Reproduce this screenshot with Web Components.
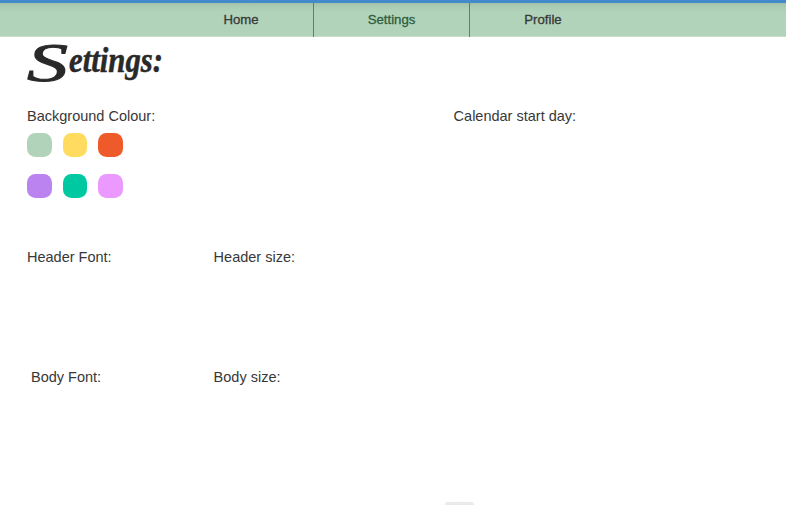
<!DOCTYPE html>
<html lang="en">
<head>
<meta charset="utf-8">
<title>Settings</title>
<style>
html, body { margin: 0; height: 100%; overflow: hidden; background: #fff; }
body { font-family: "Liberation Sans", Arial, sans-serif; font-size: 14.5px; color: #383838; }
</style>
</head>
<body>
<settings-app></settings-app>
<script>
const define = (name, html) => customElements.define(name, class extends HTMLElement {
  constructor() {
    super();
    const t = document.createElement('template');
    t.innerHTML = html;
    this.attachShadow({ mode: 'open' }).append(t.content.cloneNode(true));
  }
});

define('nav-item', `
<style>
:host { display: flex; box-sizing: border-box; width: 145px; height: 34px; padding-left: 1px; justify-content: center; font-size: 13.2px; line-height: 33px; color: #383838; -webkit-text-stroke: .3px currentColor; }
:host([current]) { width: 157px; padding: 0; color: #2f5d3e; border: solid #3c80c4; border-width: 0 1px; }
</style><slot></slot>`);

define('nav-bar', `
<style>
:host { display: flex; box-sizing: border-box; height: 37px; padding-left: 168px; border-top: 3px solid #428bca;
  background: linear-gradient(#a2c1aa 0, #abccb4 4px, #b0d3ba 9px); box-shadow: inset 0 -1px #c5dfcc; }
</style><slot></slot>`);

define('page-title', `
<style>
:host { display: block; height: 50px; margin-left: 26px; }
svg { display: block; overflow: visible; }
text { font-family: "Liberation Serif", serif; font-style: italic; font-weight: bold; fill: #292929; stroke: #292929; }
.initial { font-weight: normal; font-size: 55px; stroke-width: 1px; }
.rest { font-size: 36px; stroke-width: .5px; }
</style>
<svg width="140" height="50" role="heading" aria-label="Settings:">
<text><tspan class="initial" x="1" y="44" textLength="41" lengthAdjust="spacingAndGlyphs">S</tspan><tspan class="rest" x="43" y="35" textLength="94" lengthAdjust="spacingAndGlyphs">ettings:</tspan></text>
</svg>`);

define('setting-field', `
<style>
:host { display: block; line-height: 18px; white-space: nowrap; }
</style><slot></slot><slot name="control"></slot>`);

define('floating-tab', `
<style>
:host { position: absolute; left: 445px; top: 502px; width: 29px; height: 8px; border-radius: 6px; background: #e8eaeb; box-shadow: 0 0 2px #eee; }
</style>`);

class SwatchPicker extends HTMLElement {
  connectedCallback() {
    const root = this.attachShadow({ mode: 'open' });
    root.innerHTML = `<style>
      :host { display: grid; grid-template-columns: repeat(3, 24.6px); gap: 16.6px 11px; margin-top: 8.7px; }
      i { height: 24px; border-radius: 8.5px; }
    </style>`;
    for (const colour of this.getAttribute('colours').split(' ')) {
      const swatch = document.createElement('i');
      swatch.style.background = colour;
      root.append(swatch);
    }
  }
}
customElements.define('swatch-picker', SwatchPicker);

define('settings-app', `
<style>
:host { display: block; height: 505px; }
main { display: grid; grid-template-columns: 186.6px 240px 1fr; grid-template-rows: 141.5px 119.5px auto; padding: 19.5px 0 0 27px; }
.wide { grid-column: span 2; }
.inset { padding-left: 4px; }
</style>
<nav-bar><nav-item>Home</nav-item><nav-item current>Settings</nav-item><nav-item>Profile</nav-item></nav-bar>
<page-title></page-title>
<main>
<setting-field class="wide">Background Colour:<swatch-picker slot="control" colours="#b0d3ba #ffdc60 #ef5a2a #ba83f0 #00c9a2 #eb99ff"></swatch-picker></setting-field>
<setting-field>Calendar start day:</setting-field>
<setting-field>Header Font:</setting-field>
<setting-field class="wide">Header size:</setting-field>
<setting-field class="inset">Body Font:</setting-field>
<setting-field>Body size:</setting-field>
</main>
<floating-tab></floating-tab>`);
</script>
</body>
</html>
